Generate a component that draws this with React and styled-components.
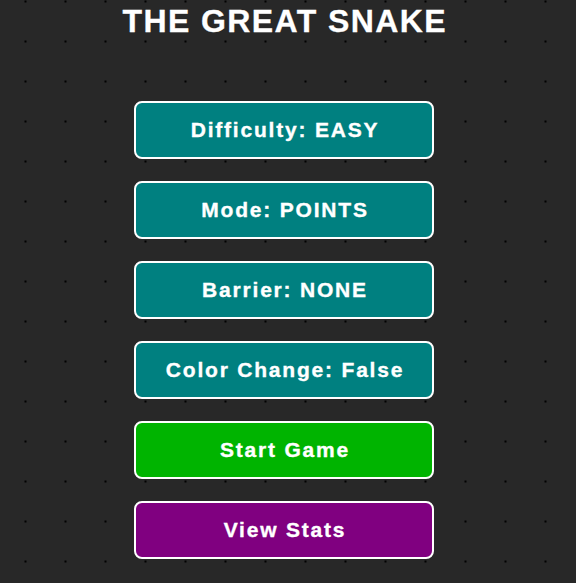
import React, { useState } from 'react';
import styled, { createGlobalStyle } from 'styled-components';

const GlobalStyle = createGlobalStyle`
  html, body {
    margin: 0;
    padding: 0;
    background-color: #282828;
  }
`;

const StyledPage = styled.div`
  width: 568px;
  min-height: 583px;
  box-sizing: border-box;
  display: flex;
  flex-direction: column;
  align-items: center;
  background-color: #282828;
  background-image: radial-gradient(circle at 1px 1px, #000000 0, #000000 0.7px, rgba(0, 0, 0, 0) 1.2px);
  background-size: 40px 40px;
  background-position: 24.5px 0.5px;
  font-family: "Liberation Sans", Arial, sans-serif;
`;

const StyledTitle = styled.h1`
  margin: 3px 0 0;
  padding-left: 1.4px;
  font-size: 32px;
  font-weight: bold;
  color: #ffffff;
  letter-spacing: 1.4px;
  -webkit-text-stroke: 0.3px #ffffff;
`;

const StyledMenu = styled.div`
  display: flex;
  flex-direction: column;
  gap: 22px;
  margin-top: 61px;
`;

const StyledButton = styled.button`
  width: 300px;
  height: 58px;
  box-sizing: border-box;
  padding: 0 0 0 2px;
  border: 2px solid #ffffff;
  border-radius: 8px;
  background: ${(props) => props.color};
  color: #ffffff;
  font-family: "Liberation Sans", Arial, sans-serif;
  font-size: 21px;
  font-weight: bold;
  letter-spacing: 1.8px;
  -webkit-text-stroke: 0.35px #ffffff;
  cursor: pointer;
`;

const difficulties = ['EASY', 'MEDIUM', 'HARD'];
const modes = ['POINTS', 'TIME'];
const barriers = ['NONE', 'WALLS'];

export default function App() {
  const [difficulty, setDifficulty] = useState(0);
  const [mode, setMode] = useState(0);
  const [barrier, setBarrier] = useState(0);
  const [colorChange, setColorChange] = useState(false);

  return (
    <>
      <GlobalStyle />
      <StyledPage>
        <StyledTitle>THE GREAT SNAKE</StyledTitle>
        <StyledMenu>
          <StyledButton color="#008080" onClick={() => setDifficulty((difficulty + 1) % difficulties.length)}>
            Difficulty: {difficulties[difficulty]}
          </StyledButton>
          <StyledButton color="#008080" onClick={() => setMode((mode + 1) % modes.length)}>
            Mode: {modes[mode]}
          </StyledButton>
          <StyledButton color="#008080" onClick={() => setBarrier((barrier + 1) % barriers.length)}>
            Barrier: {barriers[barrier]}
          </StyledButton>
          <StyledButton color="#008080" onClick={() => setColorChange(!colorChange)}>
            Color Change: {colorChange ? 'True' : 'False'}
          </StyledButton>
          <StyledButton color="#00b400">Start Game</StyledButton>
          <StyledButton color="#800080">View Stats</StyledButton>
        </StyledMenu>
      </StyledPage>
    </>
  );
}
